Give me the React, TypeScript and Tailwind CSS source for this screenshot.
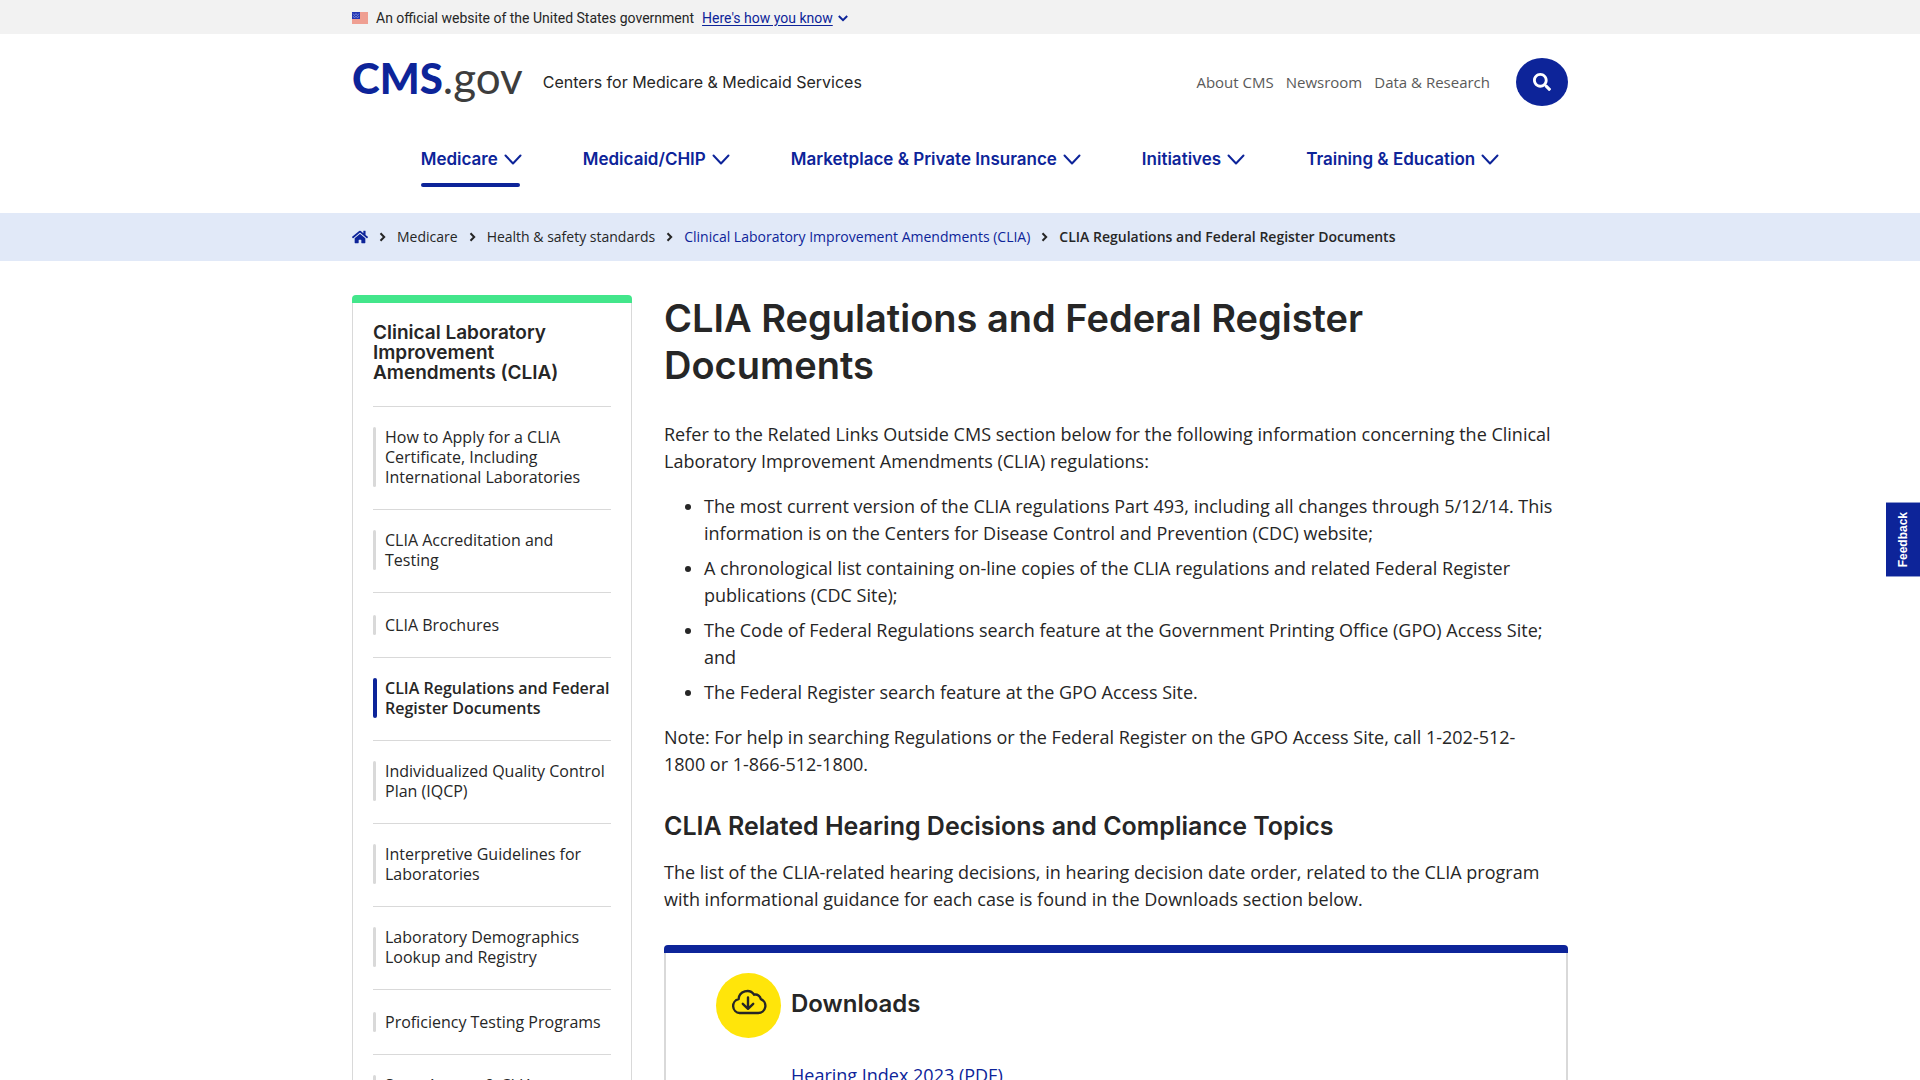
import type { ReactNode } from "react";
import { FaHome, FaSearch } from "react-icons/fa";

const navItems = [
  { label: "Medicare", active: true },
  { label: "Medicaid/CHIP" },
  { label: "Marketplace & Private Insurance" },
  { label: "Initiatives" },
  { label: "Training & Education" },
];

const sideItems: { lines: string[]; active?: boolean }[] = [
  { lines: ["How to Apply for a CLIA", "Certificate, Including", "International Laboratories"] },
  { lines: ["CLIA Accreditation and", "Testing"] },
  { lines: ["CLIA Brochures"] },
  { lines: ["CLIA Regulations and Federal", "Register Documents"], active: true },
  { lines: ["Individualized Quality Control", "Plan (IQCP)"] },
  { lines: ["Interpretive Guidelines for", "Laboratories"] },
  { lines: ["Laboratory Demographics", "Lookup and Registry"] },
  { lines: ["Proficiency Testing Programs"] },
  { lines: ["State Agency & CLIA", "Operations Branch Contacts"] },
];

function Container({ children, className = "" }: { children: ReactNode; className?: string }) {
  return <div className={`mx-auto w-full max-w-[1216px] ${className}`}>{children}</div>;
}

function FlagIcon() {
  return (
    <svg width="16" height="12" viewBox="0 0 16 12" aria-hidden="true" className="shrink-0">
      <rect width="16" height="12" fill="#ef9f92" />
      <rect width="8" height="7" fill="#2436b4" />
      <path d="M1 1.5l1.5 2L4 1.5l1.5 2L7 1.5M1 4l1.5 2L4 4l1.5 2L7 4" fill="none" stroke="#8d9be0" strokeWidth="0.7" />
    </svg>
  );
}

function ChevronRight() {
  return (
    <svg width="7" height="10" viewBox="0 0 7 10" fill="none" stroke="#262626" strokeWidth="2" aria-hidden="true">
      <path d="M1.5 1.2L5.2 5L1.5 8.8" />
    </svg>
  );
}

function ChevronWide() {
  return (
    <svg width="18" height="11" viewBox="0 0 18 11" fill="none" stroke="currentColor" strokeWidth="2" strokeLinecap="round" strokeLinejoin="round" aria-hidden="true">
      <path d="M1.5 1.5L9 9.5L16.5 1.5" />
    </svg>
  );
}

function CloudDownload() {
  return (
    <svg width="36" height="26" viewBox="0 0 36 26" fill="none" stroke="#262626" strokeWidth="2.4" strokeLinecap="round" strokeLinejoin="round" aria-hidden="true">
      <path d="M8.6 24h18.6a7.2 7.2 0 0 0 2.6-13.9a5.3 5.3 0 0 0-6.6-4.4A8.6 8.6 0 0 0 7.6 10.2A7 7 0 0 0 8.6 24z" />
      <path d="M17 8.5v11M11.8 14.8l5.2 5l5.2-5" />
    </svg>
  );
}

export default function App() {
  return (
    <div className="bg-white font-['Open_Sans',sans-serif] text-[#262626]">
      <div className="bg-[#f2f2f2]">
        <Container className="flex h-[34px] items-center pt-[2px] font-['Roboto',sans-serif] text-sm">
          <FlagIcon />
          <span className="ml-2">An official website of the United States government</span>
          <button type="button" className="ml-2 flex items-center gap-[5px] text-[#0d2499]">
            <span className="underline underline-offset-2">Here's how you know</span>
            <svg width="10" height="7" viewBox="0 0 10 7" fill="none" stroke="currentColor" strokeWidth="2" aria-hidden="true">
              <path d="M0.8 1L5 5.2L9.2 1" />
            </svg>
          </button>
        </Container>
      </div>

      <header>
        <Container className="flex h-24 items-center">
          <a href="#" className="font-['Lato',sans-serif] leading-[48px] whitespace-nowrap">
            <span className="text-[42px] font-black text-[#0d2499]">CMS</span>
            <span className="text-[44px] text-[#3d3d3d]">.gov</span>
          </a>
          <span className="ml-5 font-['Inter',sans-serif] text-base">Centers for Medicare &amp; Medicaid Services</span>
          <nav aria-label="Secondary" className="mr-[26px] ml-auto flex gap-3 text-[15px] text-[#5a5a5a]">
            <a href="#">About CMS</a>
            <a href="#">Newsroom</a>
            <a href="#">Data &amp; Research</a>
          </nav>
          <button type="button" aria-label="Search" className="flex h-12 w-[52px] items-center justify-center rounded-[50%] bg-[#0d2499] text-white">
            <FaSearch size={18} />
          </button>
        </Container>
        <Container className="h-[83px] pt-[17px]">
          <nav aria-label="Main">
            <ul className="flex justify-center gap-[61px] font-['Inter',sans-serif]">
              {navItems.map((item) => (
                <li key={item.label}>
                  <button type="button" className="flex items-center gap-[6px] text-[17px] leading-6 font-semibold whitespace-nowrap text-[#0d2499]">
                    {item.label}
                    <ChevronWide />
                  </button>
                  {item.active && <div className="mt-3 mr-[2px] h-1 rounded-sm bg-[#0d2499]" />}
                </li>
              ))}
            </ul>
          </nav>
        </Container>
      </header>

      <nav aria-label="Breadcrumb" className="bg-[#e1e9f8]">
        <Container>
          <ol className="flex h-12 items-center gap-[11px] text-sm whitespace-nowrap">
            <li>
              <a href="#" aria-label="Home" className="text-[#0d2499]">
                <FaHome size={16} />
              </a>
            </li>
            <li className="flex items-center gap-[11px]">
              <ChevronRight />
              Medicare
            </li>
            <li className="flex items-center gap-[11px]">
              <ChevronRight />
              Health &amp; safety standards
            </li>
            <li className="flex items-center gap-[11px]">
              <ChevronRight />
              <a href="#" className="text-[#0d2499]">Clinical Laboratory Improvement Amendments (CLIA)</a>
            </li>
            <li className="flex items-center gap-[11px] font-semibold">
              <ChevronRight />
              CLIA Regulations and Federal Register Documents
            </li>
          </ol>
        </Container>
      </nav>

      <Container className="flex items-start gap-8 pt-[34px]">
        <aside className="w-[280px] shrink-0">
          <div className="h-2 rounded-t-sm bg-[#43e68b]" />
          <div className="border-x border-[#d9d9d9] px-5 pt-5">
            <h2 className="pb-[23px] font-['Inter',sans-serif] text-[19px] leading-5 font-semibold">
              Clinical Laboratory
              <br />
              Improvement
              <br />
              Amendments (CLIA)
            </h2>
            <ul className="text-base leading-5">
              {sideItems.map((item) => (
                <li
                  key={item.lines[0]}
                  className={`flex border-t border-[#d9d9d9] pb-[22px] ${item.lines.length === 1 ? "pt-[22px]" : "pt-5"}`}
                >
                  <span className="mr-2 w-1 shrink-0">
                    <span className={`block h-full rounded-sm ${item.active ? "bg-[#0d2499]" : "w-[3px] bg-[#d9d9d9]"}`} />
                  </span>
                  <a href="#" className={`whitespace-nowrap ${item.active ? "font-semibold" : ""}`}>
                    {item.lines.map((line) => (
                      <span key={line} className="block">{line}</span>
                    ))}
                  </a>
                </li>
              ))}
            </ul>
          </div>
        </aside>

        <main className="min-w-0 flex-1 text-lg leading-[27px]">
          <h1 className="font-['Inter',sans-serif] text-[38px] leading-[47px] font-semibold">
            CLIA Regulations and Federal Register
            <br />
            Documents
          </h1>
          <p className="mt-8">
            Refer to the Related Links Outside CMS section below for the following information concerning the Clinical
            Laboratory Improvement Amendments (CLIA) regulations:
          </p>
          <ul className="mt-[18px] list-disc space-y-2 pl-10">
            <li>
              The most current version of the CLIA regulations Part 493, including all changes through 5/12/14. This
              information is on the Centers for Disease Control and Prevention (CDC) website;
            </li>
            <li>
              A chronological list containing on-line copies of the CLIA regulations and related Federal Register
              <br />
              publications (CDC Site);
            </li>
            <li>
              The Code of Federal Regulations search feature at the Government Printing Office (GPO) Access Site;
              <br />
              and
            </li>
            <li>The Federal Register search feature at the GPO Access Site.</li>
          </ul>
          <p className="mt-[18px]">
            Note: For help in searching Regulations or the Federal Register on the GPO Access Site, call 1-202-512-
            <br />
            1800 or 1-866-512-1800.
          </p>
          <h2 className="mt-8 font-['Inter',sans-serif] text-[25px] leading-8 font-semibold">
            CLIA Related Hearing Decisions and Compliance Topics
          </h2>
          <p className="mt-[17px]">
            The list of the CLIA-related hearing decisions, in hearing decision date order, related to the CLIA program
            <br />
            with informational guidance for each case is found in the Downloads section below.
          </p>

          <section aria-labelledby="downloads" className="mt-8">
            <div className="h-2 rounded-t bg-[#0d2499]" />
            <div className="border-x-2 border-[#d9d9d9] px-[50px] pt-5 pb-10">
              <div className="flex items-center gap-[10px]">
                <div className="flex h-[65px] w-[65px] items-center justify-center rounded-full bg-[#ffe50a] pb-2">
                  <CloudDownload />
                </div>
                <h2 id="downloads" className="pb-1 font-['Inter',sans-serif] text-2xl font-semibold">Downloads</h2>
              </div>
              <ul className="mt-6 pl-[75px]">
                <li>
                  <a href="#" className="text-[#0d2499]">Hearing Index 2023 (PDF)</a>
                </li>
              </ul>
            </div>
          </section>
        </main>
      </Container>

      <button
        type="button"
        className="fixed top-[502px] right-0 flex h-[75px] w-[34px] items-center justify-center border-y border-[#8d99cf] bg-[#0d2499] font-['Liberation_Sans',Arial,sans-serif] text-xs font-bold text-white"
      >
        <span className="rotate-180 [writing-mode:vertical-rl]">Feedback</span>
      </button>
    </div>
  );
}
